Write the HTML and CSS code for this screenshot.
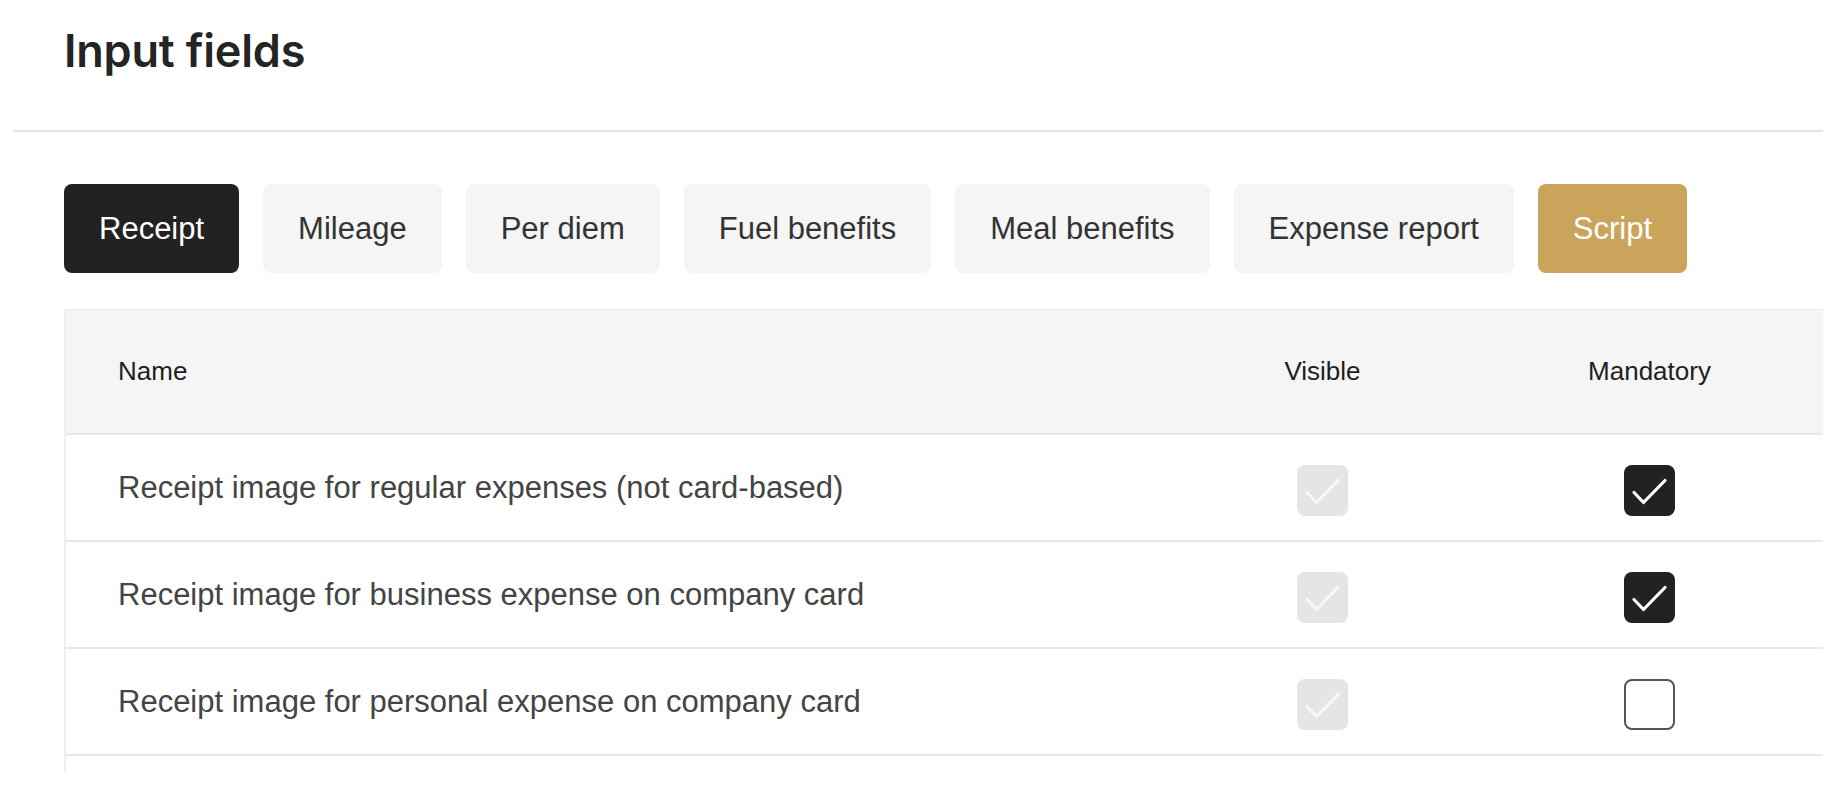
FILE: index.html
```html
<!DOCTYPE html>
<html lang="en">
<head>
<meta charset="utf-8">
<title>Input fields</title>
<link rel="stylesheet" href="styles.css">
</head>
<body>
<div class="page">
  <header class="page-header">
    <h1 class="title">Input fields</h1>
  </header>
  <main class="content">
    <nav class="tabs">
      <button class="tab tab-active">Receipt</button>
      <button class="tab">Mileage</button>
      <button class="tab">Per diem</button>
      <button class="tab">Fuel benefits</button>
      <button class="tab">Meal benefits</button>
      <button class="tab">Expense report</button>
      <button class="tab tab-script">Script</button>
    </nav>
    <section class="table">
      <div class="row head">
        <span class="cell-name">Name</span>
        <span class="cell-center">Visible</span>
        <span class="cell-center">Mandatory</span>
      </div>
      <div class="row">
        <span class="cell-name">Receipt image for regular expenses (not card-based)</span>
        <span class="cell-center"><span class="check check-disabled"><svg viewBox="0 0 51 51"><path d="M10 27.5 L19.5 37.5 L41 15.5"/></svg></span></span>
        <span class="cell-center"><span class="check check-on"><svg viewBox="0 0 51 51"><path d="M10 27.5 L19.5 37.5 L41 15.5"/></svg></span></span>
      </div>
      <div class="row">
        <span class="cell-name">Receipt image for business expense on company card</span>
        <span class="cell-center"><span class="check check-disabled"><svg viewBox="0 0 51 51"><path d="M10 27.5 L19.5 37.5 L41 15.5"/></svg></span></span>
        <span class="cell-center"><span class="check check-on"><svg viewBox="0 0 51 51"><path d="M10 27.5 L19.5 37.5 L41 15.5"/></svg></span></span>
      </div>
      <div class="row">
        <span class="cell-name">Receipt image for personal expense on company card</span>
        <span class="cell-center"><span class="check check-disabled"><svg viewBox="0 0 51 51"><path d="M10 27.5 L19.5 37.5 L41 15.5"/></svg></span></span>
        <span class="cell-center"><span class="check check-off"></span></span>
      </div>
    </section>
  </main>
</div>
</body>
</html>
```

FILE: styles.css
```css
* { box-sizing: border-box; }

html, body {
  margin: 0;
  padding: 0;
  background: #ffffff;
}

body {
  font-family: "Liberation Sans", Arial, sans-serif;
  color: #222222;
}

.page {
  margin-left: 13px;
  width: 1810px;
}

.page-header {
  padding: 24px 0 52px 51px;
  border-bottom: 2px solid #e6e6e6;
}

.title {
  margin: 0;
  font-family: Inter, "Liberation Sans", sans-serif;
  font-weight: 600;
  font-size: 45px;
  line-height: 54px;
  color: #242424;
  letter-spacing: -0.2px;
}

.content {
  padding: 52px 0 0 51px;
}

.tabs {
  display: flex;
  gap: 24px;
}

.tab {
  display: flex;
  align-items: center;
  height: 89px;
  padding: 0 35px;
  border: none;
  border-radius: 8px;
  background: #f5f5f5;
  color: #333333;
  font-family: "Liberation Sans", Arial, sans-serif;
  font-size: 31px;
  cursor: pointer;
}

.tab-active {
  background: #222222;
  color: #ffffff;
}

.tab-script {
  background: #c9a45a;
  color: #ffffff;
}

.table {
  margin-top: 36px;
  height: 464px;
  overflow: hidden;
  border-left: 2px solid #f0f0f0;
}

.row {
  display: grid;
  grid-template-columns: 1fr 327px 327px;
  align-items: center;
  height: 107px;
  padding: 0 10px 0 52px;
  border-bottom: 2px solid #e8e8e8;
  font-size: 31px;
  color: #444444;
}

.row.head {
  height: 126px;
  background: #f5f5f5;
  border-top: 1px solid #efefef;
  font-size: 26px;
  color: #1e1e1e;
}

.cell-name {
  white-space: nowrap;
}

.cell-center {
  display: flex;
  justify-content: center;
  align-items: center;
}

.check {
  display: block;
  width: 51px;
  height: 51px;
  margin-top: 6px;
  border-radius: 8px;
}

.check svg {
  display: block;
  width: 51px;
  height: 51px;
}

.check svg path {
  fill: none;
  stroke-width: 3.2;
  stroke-linecap: round;
  stroke-linejoin: round;
}

.check-disabled {
  background: #e5e5e5;
}

.check-disabled svg path {
  stroke: #f7f7f7;
}

.check-on {
  background: #222222;
}

.check-on svg path {
  stroke: #ffffff;
}

.check-off {
  background: #ffffff;
  border: 2.5px solid #555555;
}
```
